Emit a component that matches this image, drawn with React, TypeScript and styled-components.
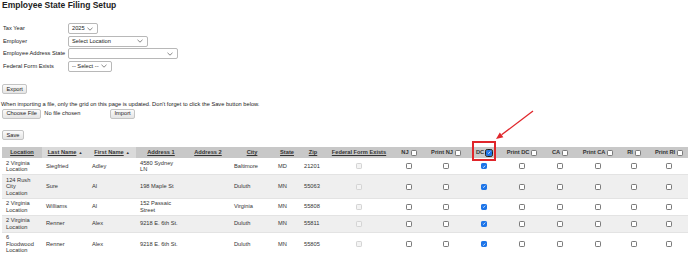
import React from 'react'
import styled, { createGlobalStyle } from 'styled-components'

const GlobalStyle = createGlobalStyle`
  html, body {
    margin: 0;
    padding: 0;
    background: #fff;
  }
  body {
    font-family: "Liberation Sans", Arial, sans-serif;
    color: #222;
  }
`

const Page = styled.div`
  position: relative;
  width: 688px;
  box-sizing: border-box;
  padding-left: 2px;
  font-size: 5.7px;
  line-height: 7px;
`

const Title = styled.h1`
  margin: 0;
  font-size: 8.5px;
  line-height: 11px;
  font-weight: bold;
  color: #222;
`

const FormGrid = styled.div`
  display: grid;
  grid-template-columns: 65px auto;
  row-gap: 1.5px;
  margin-top: 12px;
  padding-left: 1px;
  align-items: center;
  justify-items: start;
`

const Label = styled.div`
  color: #222;
  white-space: nowrap;
`

const SelectBox = styled.div<{ $w: number }>`
  width: ${p => p.$w}px;
  height: 11px;
  box-sizing: border-box;
  display: flex;
  align-items: center;
  justify-content: space-between;
  padding: 0 4px 0 3px;
  border: 1px solid #b8b8b8;
  border-radius: 2px;
  background: #fff;
  color: #222;
`

const Button = styled.button`
  font-family: inherit;
  font-size: 5.7px;
  line-height: 7px;
  height: 10px;
  padding: 0 3.5px;
  border: 1px solid #c4c4c4;
  border-radius: 2px;
  background: linear-gradient(#fbfbfb, #e4e4e4);
  color: #222;
`

const Section = styled.div<{ $top: number }>`
  margin-top: ${p => p.$top}px;
  display: flex;
  align-items: center;
`

const Note = styled.p`
  margin: 6.5px 0 0 -1px;
  color: #222;
`

const FileField = styled.div`
  width: 106px;
  display: flex;
  align-items: center;
  gap: 3px;
`

const ImportButton = styled(Button)`
  margin-left: 2px;
`

const Table = styled.table`
  width: 686px;
  margin-top: 7px;
  border-collapse: collapse;
  table-layout: fixed;
`

const Th = styled.th<{ $sorted?: boolean }>`
  height: 11px;
  padding: 0 2px;
  background: ${p => (p.$sorted ? '#dadada' : '#c8c8c8')};
  color: #333;
  font-weight: bold;
  text-decoration: underline;
  text-align: center;
  white-space: nowrap;
`

const HeadInner = styled.span`
  display: inline-flex;
  align-items: center;
  gap: 2px;
`

const SortArrow = styled.span`
  display: inline-block;
  margin-left: 2px;
  font-size: 4px;
  text-decoration: none;
`

const Highlight = styled(HeadInner)`
  position: relative;
  &::after {
    content: '';
    position: absolute;
    left: -4px;
    right: -4px;
    top: -8px;
    bottom: -5px;
    border: 2px solid #e0262b;
  }
`

const Tr = styled.tr<{ $alt?: boolean }>`
  background: ${p => (p.$alt ? '#efefef' : '#fff')};
  border-bottom: 1px solid #e3e3e3;
`

const Td = styled.td<{ $center?: boolean; $padR?: number }>`
  padding: 1.5px ${p => p.$padR ?? 5}px 1.5px 4px;
  line-height: 6.5px;
  color: #333;
  vertical-align: middle;
  text-align: ${p => (p.$center ? 'center' : 'left')};
`

const Box = styled.span<{ $on?: boolean; $off?: boolean; $focus?: boolean }>`
  display: inline-flex;
  align-items: center;
  justify-content: center;
  width: 6px;
  height: 6px;
  box-sizing: border-box;
  vertical-align: middle;
  border-radius: 1.2px;
  border: 0.8px solid ${p => (p.$on ? '#1a73e8' : p.$off ? '#d4d4d4' : '#7a7a7a')};
  background: ${p => (p.$on ? '#1a73e8' : p.$off ? '#f4f4f4' : '#fff')};
  outline: ${p => (p.$focus ? '1px solid #1f1f1f' : 'none')};
  outline-offset: 0.5px;
`

const Arrow = styled.svg`
  position: absolute;
  left: 490px;
  top: 105px;
`

function CheckBox({ checked, disabled, focus }: { checked?: boolean; disabled?: boolean; focus?: boolean }) {
  return (
    <Box $on={checked} $off={disabled} $focus={focus} role="checkbox" aria-checked={!!checked}>
      {checked && (
        <svg width="5" height="5" viewBox="0 0 10 10">
          <path d="M2 5.3 L4.2 7.4 L8.2 2.6" fill="none" stroke="#fff" strokeWidth="1.8" />
        </svg>
      )}
    </Box>
  )
}

function Chevron() {
  return (
    <svg width="6" height="4" viewBox="0 0 6 4">
      <path d="M0.5 0.8 L3 3.2 L5.5 0.8" fill="none" stroke="#555" strokeWidth="0.7" />
    </svg>
  )
}

function Select({ w, text }: { w: number; text: string }) {
  return (
    <SelectBox $w={w}>
      <span>{text}</span>
      <Chevron />
    </SelectBox>
  )
}

const cols = [40, 46, 48, 50, 44, 44, 26, 26, 66, 34, 40, 36, 40, 36, 40, 32, 38]

const rows = [
  { loc: '2 Virginia Location', last: 'Siegfried', first: 'Adley', addr: '4580 Sydney LN', city: 'Baltimore', st: 'MD', zip: '21201' },
  { loc: '124 Rush City Location', last: 'Sure', first: 'Al', addr: '198 Maple St', city: 'Duluth', st: 'MN', zip: '55063' },
  { loc: '2 Virginia Location', last: 'Williams', first: 'Al', addr: '152 Passaic Street', city: 'Virginia', st: 'MN', zip: '55808' },
  { loc: '2 Virginia Location', last: 'Renner', first: 'Alex', addr: '9218 E. 6th St.', city: 'Duluth', st: 'MN', zip: '55811' },
  { loc: '6 Floodwood Location', last: 'Renner', first: 'Alex', addr: '9218 E. 6th St.', city: 'Duluth', st: 'MN', zip: '55805' },
]

const stateCols = ['NJ', 'Print NJ', 'DC', 'Print DC', 'CA', 'Print CA', 'RI', 'Print RI']

export default function App() {
  return (
    <Page>
      <GlobalStyle />
      <Title>Employee State Filing Setup</Title>

      <FormGrid>
        <Label>Tax Year</Label>
        <Select w={30} text="2025" />
        <Label>Employer</Label>
        <Select w={80} text="Select Location" />
        <Label>Employee Address State</Label>
        <Select w={110} text="" />
        <Label>Federal Form Exists</Label>
        <Select w={44} text="-- Select --" />
      </FormGrid>

      <Section $top={12.5}>
        <Button>Export</Button>
      </Section>

      <Note>When importing a file, only the grid on this page is updated. Don't forget to click the Save button below.</Note>
      <Section $top={1}>
        <FileField>
          <Button>Choose File</Button>
          <span>No file chosen</span>
        </FileField>
        <ImportButton>Import</ImportButton>
      </Section>

      <Section $top={11.5}>
        <Button>Save</Button>
      </Section>

      <Table>
        <colgroup>
          {cols.map((w, i) => (
            <col key={i} style={{ width: w }} />
          ))}
        </colgroup>
        <thead>
          <tr>
            <Th>Location</Th>
            <Th $sorted>
              Last Name<SortArrow>▲</SortArrow>
            </Th>
            <Th $sorted>
              First Name<SortArrow>▲</SortArrow>
            </Th>
            <Th>Address 1</Th>
            <Th>Address 2</Th>
            <Th>City</Th>
            <Th>State</Th>
            <Th>Zip</Th>
            <Th>Federal Form Exists</Th>
            {stateCols.map(c =>
              c === 'DC' ? (
                <Th key={c}>
                  <Highlight>
                    {c}
                    <CheckBox checked focus />
                  </Highlight>
                </Th>
              ) : (
                <Th key={c}>
                  <HeadInner>
                    {c}
                    <CheckBox />
                  </HeadInner>
                </Th>
              )
            )}
          </tr>
        </thead>
        <tbody>
          {rows.map((r, i) => (
            <Tr key={i} $alt={i % 2 === 1}>
              <Td $padR={6}>{r.loc}</Td>
              <Td>{r.last}</Td>
              <Td>{r.first}</Td>
              <Td>{r.addr}</Td>
              <Td></Td>
              <Td>{r.city}</Td>
              <Td>{r.st}</Td>
              <Td>{r.zip}</Td>
              <Td $center>
                <CheckBox disabled />
              </Td>
              {stateCols.map(c => (
                <Td $center key={c}>
                  <CheckBox checked={c === 'DC'} />
                </Td>
              ))}
            </Tr>
          ))}
        </tbody>
      </Table>

      <Arrow width="50" height="40" viewBox="0 0 50 40">
        <line x1="43" y1="6" x2="11.6" y2="29.8" stroke="#e0262b" strokeWidth="1.3" />
        <polygon points="6,34 13.4,32.2 9.8,27.4" fill="#e0262b" />
      </Arrow>
    </Page>
  )
}
